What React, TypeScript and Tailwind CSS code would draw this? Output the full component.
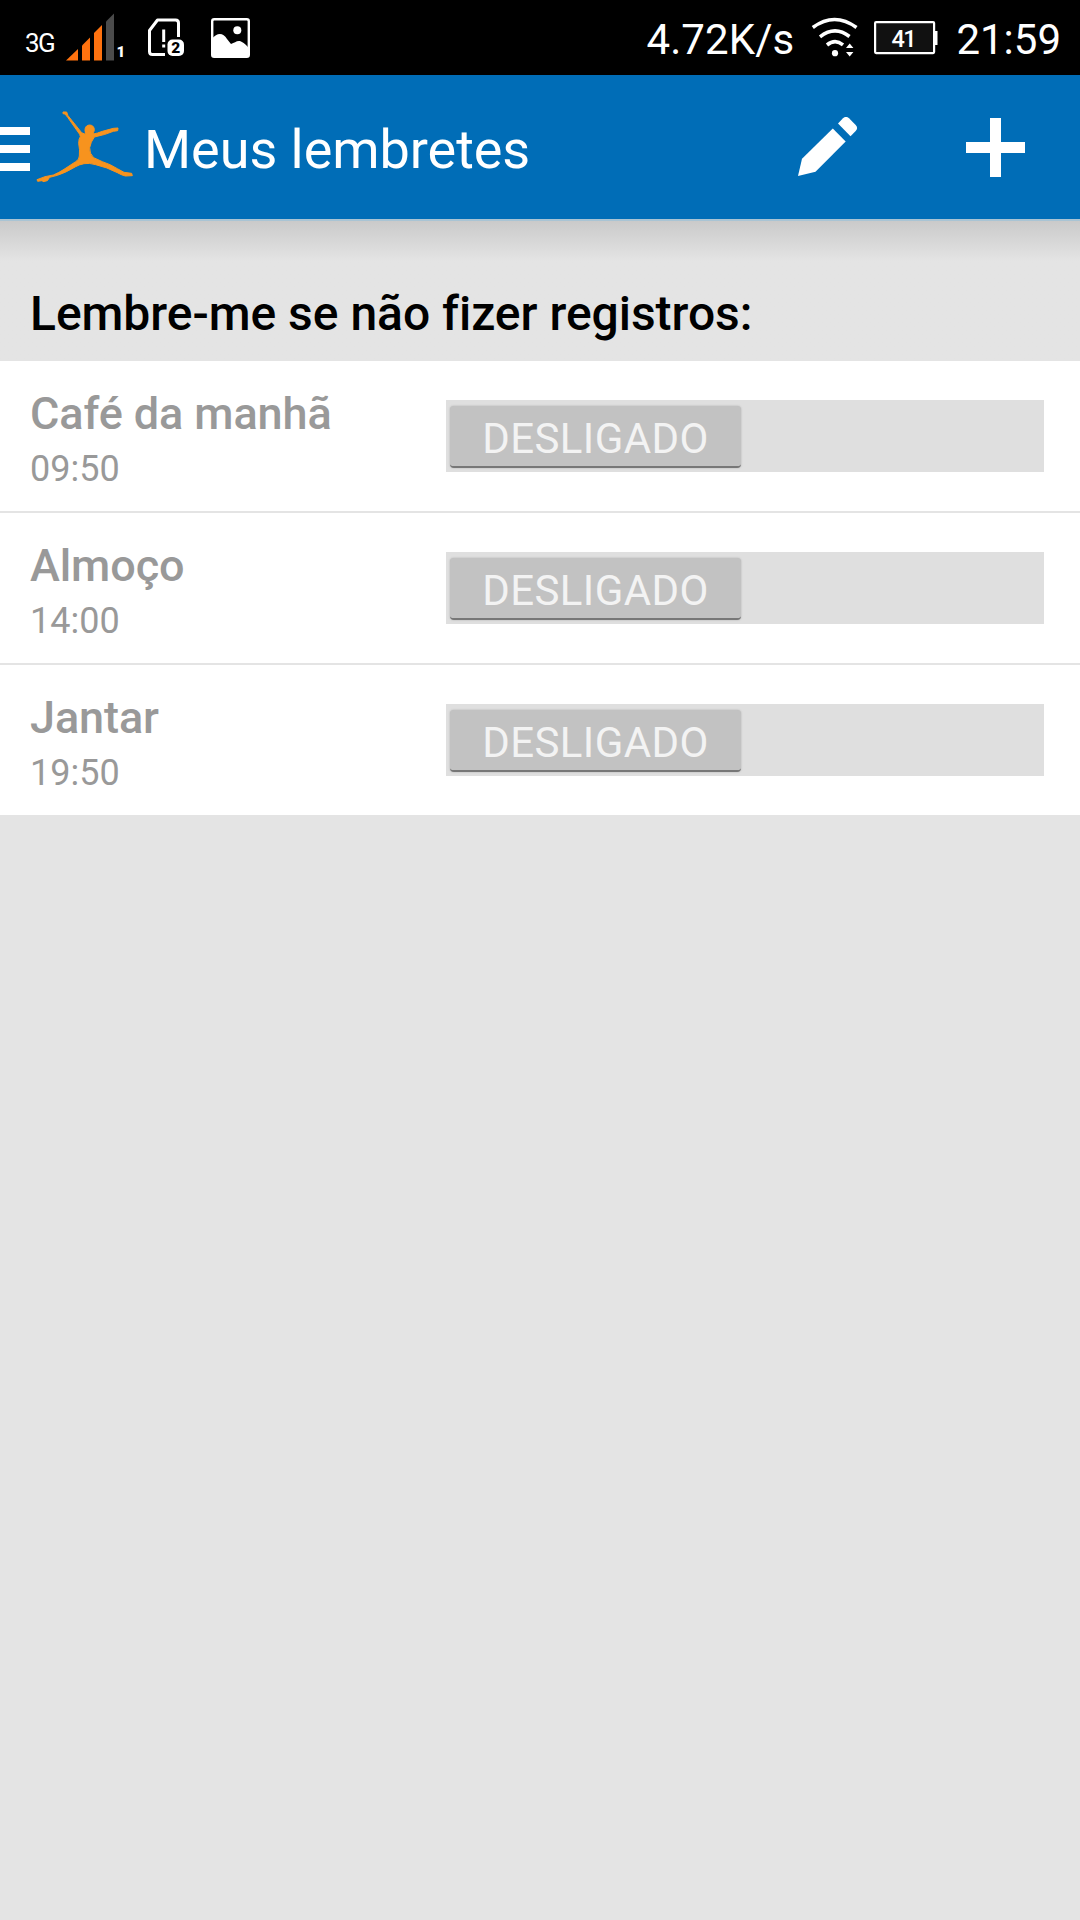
const REMINDERS = [
    { name: 'Café da manhã', time: '09:50' },
    { name: 'Almoço', time: '14:00' },
    { name: 'Jantar', time: '19:50' },
];

const SignalIcon = () => (
    <svg className="ml-[10px] h-[50px] w-[60px] shrink-0" viewBox="65 12 60 50">
        <g fill="#ff720f">
            <path d="M66 59.500L78 48v11.500z" />
            <path d="M82 44.500l8-8v23h-8z" />
            <path d="M94 32l8-8v35.500h-8z" />
        </g>
        <path d="M106 20.500l8-8v47h-8z" fill="#4b4b4b" />
        <text x="116.500" y="56" fill="#fff" fontSize="15" fontWeight="900">
            1
        </text>
    </svg>
);

const SimIcon = () => (
    <svg className="ml-[20px] h-[50px] w-[42px] shrink-0" viewBox="145 12 42 50">
        <path
            d="M165 53.500h-12.500q-3 0-3-3V29.500l8-10.500H175.500q3 0 3 3V36"
            fill="none"
            stroke="#fff"
            strokeWidth="3"
            strokeLinejoin="round"
        />
        <path d="M162.200 28.500h3v12.500h-3zM162.200 43.500h3v3h-3z" fill="#fff" />
        <rect x="167.500" y="38.500" width="16.500" height="16.500" rx="5" fill="#fff" />
        <text x="175.800" y="52.200" fill="#000" fontSize="15.500" fontWeight="900" textAnchor="middle">
            2
        </text>
    </svg>
);

const PictureIcon = () => (
    <svg className="ml-[24px] h-[40px] w-[39px] shrink-0" viewBox="211 18 39 40">
        <rect x="212.200" y="19.200" width="36.600" height="37.600" rx="2" fill="none" stroke="#fff" strokeWidth="2.400" />
        <circle cx="237.300" cy="30.300" r="4" fill="#fff" />
        <path d="M212 38.500C217 32.500 223 32 227 39L231 44C235 43 237 40 241 41.500C245 43 247 46 249 48.500V57H212z" fill="#fff" />
    </svg>
);

const WifiIcon = () => (
    <svg className="ml-[17px] h-[42px] w-[48px] shrink-0" viewBox="811 17 48 42">
        <g fill="none" stroke="#fff" strokeWidth="3.600">
            <path d="M812.800 27.500Q834.500 11.500 856.500 27.500" />
            <path d="M820 36.800Q835 25.200 849.500 36.500" />
            <path d="M827 45Q835 38.500 843 44.800" />
        </g>
        <circle cx="835" cy="53.200" r="3.100" fill="#fff" />
        <path d="M846 48l3.700-4.500 3.700 4.500zM846 52l3.700 4.500 3.700-4.500z" fill="#fff" />
    </svg>
);

const BatteryIcon = () => (
    <svg className="ml-[15px] h-[36px] w-[64px] shrink-0" viewBox="874 19 64 36">
        <rect x="875.100" y="21.100" width="59" height="31" rx="1" fill="#111" stroke="#fff" strokeWidth="2.200" />
        <path d="M935 30h2.500v14H935z" fill="#fff" />
        <text x="904" y="45.500" fill="#fff" fontSize="23.500" fontWeight="500" textAnchor="middle" textLength="25">
            41
        </text>
    </svg>
);

const StatusBar = () => (
    <div className="flex h-[75px] items-center bg-black text-white">
        <div className="ml-[25px] mt-[10px] w-[30px] text-[26px] leading-none tracking-[-1.5px]">3G</div>
        <SignalIcon />
        <SimIcon />
        <PictureIcon />
        <div className="ml-auto mt-[4px] text-[42px] leading-[50px] tracking-[0.1px]">4.72K/s</div>
        <WifiIcon />
        <BatteryIcon />
        <div className="ml-[18px] mr-[19px] mt-[4px] text-[42px] leading-[50px]">21:59</div>
    </div>
);

const DancerLogo = () => (
    <svg className="ml-[6px] h-[72px] w-[98px] shrink-0" viewBox="6 15 294 216" fill="#f7931e" stroke="#f7931e" strokeWidth="3" strokeLinejoin="round">
        <circle cx="167" cy="71" r="14" />
        <path d="M87 18H98L102 29L143 80L154 85V72L178 80V84Q190 82 205 76L238 67L252 66L251 74L238 76Q215 86 181 93Q170 108 167 125Q166 143 179 155L205 167Q230 175 250 188L270 199L293 202L295 209L274 210Q262 207 250 200Q220 184 185 176Q165 170 150 173Q135 176 125 182Q95 200 70 208L47 214L40 224L27 227L24 224L11 226L9 221L33 212L58 207Q75 200 90 190L125 167Q136 161 136 150Q138 130 134 112Q134 98 139 92L137 85L101 34L93 24L87 23z" />
    </svg>
);

const AppBar = () => (
    <header className="flex h-[144px] items-center bg-[#006db7] text-white">
        <div className="mt-[4px] flex w-[30px] flex-col gap-[10px]">
            <div className="h-2 bg-white" />
            <div className="h-2 bg-white" />
            <div className="h-2 bg-white" />
        </div>
        <DancerLogo />
        <h1 className="ml-[10px] mt-[6px] text-[54px] leading-[64px] tracking-[-0.05px]">Meus lembretes</h1>
        <svg className="ml-auto h-[60px] w-[60px]" viewBox="798 117 60 60" fill="#fff">
            <path d="M832.800 128.500L845.700 141.500L815.500 171.800L798 176L802 158.800z" />
            <path d="M838 123.500L843 118.200Q846 115.500 849 118.200L855.700 125Q858.500 128 855.700 131L850.500 136.200z" />
        </svg>
        <svg className="ml-[108px] mr-[55px] h-[59px] w-[59px]" viewBox="0 0 59 59" fill="#fff">
            <path d="M24 0h11v24h24v11H35v24H24V35H0V24h24z" />
        </svg>
    </header>
);

const ReminderRow = ({ name, time }: { name: string; time: string }) => (
    <li className="flex h-[150px] bg-white">
        <div className="w-[446px] pl-[30px] pt-[26px] text-[#999]">
            <div className="text-[45px] font-medium leading-[54px] tracking-[-0.1px]">{name}</div>
            <div className="text-[36px] leading-[56px]">{time}</div>
        </div>
        <div className="mt-[39px] h-[72px] w-[598px] bg-[#dfdfdf] pl-1 pt-[6px]">
            <div className="h-[62px] w-[291px] rounded-[4px] border-b-2 border-[#777] bg-[#c2c2c2] pt-[4px] text-center text-[42px] leading-[57px] tracking-[0.4px] text-[#f3f3f3] shadow-[0_0_2px_#aaa]">
                DESLIGADO
            </div>
        </div>
    </li>
);

export default function App() {
    return (
        <div className="h-[1920px] w-[1080px] overflow-hidden bg-[#e4e4e4] font-['Roboto',sans-serif]">
            <StatusBar />
            <AppBar />
            <div className="h-[142px] border-t-2 border-[#a9c4d4] bg-linear-to-b from-[#cacaca] to-[#e4e4e4] to-[40px] pl-[30px] pt-[63px]">
                <h2 className="text-[48px] font-medium leading-[60px] tracking-[-0.03px] text-black [font-variant-ligatures:none]">
                    Lembre-me se não fizer registros:
                </h2>
            </div>
            <ul className="flex flex-col gap-[2px]">
                {REMINDERS.map((reminder) => (
                    <ReminderRow key={reminder.name} {...reminder} />
                ))}
            </ul>
        </div>
    );
}
